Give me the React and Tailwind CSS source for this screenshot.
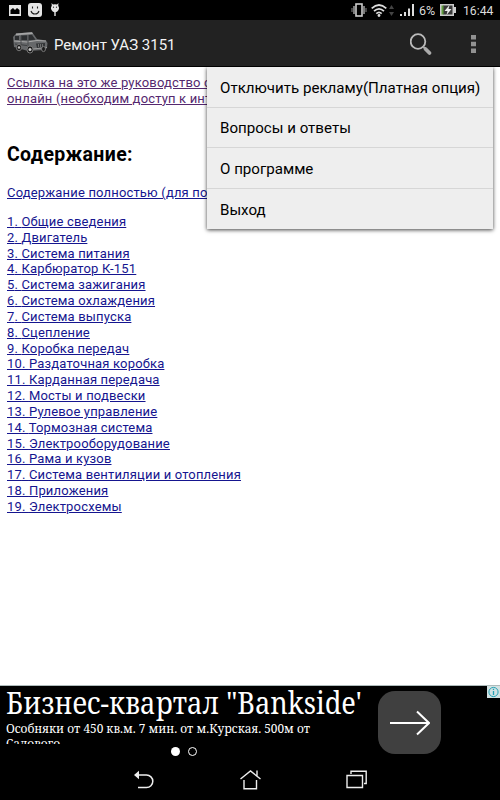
import React from 'react';

const menuItems = [
  'Отключить рекламу(Платная опция)',
  'Вопросы и ответы',
  'О программе',
  'Выход',
];

const chapters = [
  'Общие сведения',
  'Двигатель',
  'Система питания',
  'Карбюратор К-151',
  'Система зажигания',
  'Система охлаждения',
  'Система выпуска',
  'Сцепление',
  'Коробка передач',
  'Раздаточная коробка',
  'Карданная передача',
  'Мосты и подвески',
  'Рулевое управление',
  'Тормозная система',
  'Электрооборудование',
  'Рама и кузов',
  'Система вентиляции и отопления',
  'Приложения',
  'Электросхемы',
];

const StatusBar = () => (
  <div className="flex h-5 items-center justify-between bg-black pl-[9px] pr-[6px] text-[#dcdcdc]">
    <div className="flex items-center">
      <svg width="12" height="11" viewBox="0 0 12 11">
        <path fill="#e4e4e4" d="M0 0h12v11H0z" />
        <path fill="#000" d="M1.5 5 4 3l2 2 2-2 2.5 2v4h-9z" />
      </svg>
      <svg className="ml-[7px]" width="14" height="14" viewBox="0 0 14 14">
        <rect width="14" height="14" rx="3" fill="#e4e4e4" />
        <path d="M4.5 3.6v2M9.5 3.6v2M3 8c1.2 4 6.8 4 8 0" fill="none" stroke="#222" strokeWidth="1.1" />
      </svg>
      <svg className="ml-[8px]" width="10" height="14" viewBox="0 0 10 14">
        <path fill="#e4e4e4" d="M1.5 0 3 1.6Q5 .8 7 1.6L8.5 0 8.2 2.5Q9.6 4.5 8.5 7 7.5 9 5.7 9.3V13H4.3V9.3Q2.5 9 1.5 7 .4 4.5 1.8 2.5z" />
        <circle cx="3.5" cy="4.2" r=".6" fill="#222" />
        <circle cx="6.5" cy="4.2" r=".6" fill="#222" />
      </svg>
    </div>
    <div className="flex items-center">
      <svg width="16" height="14" viewBox="0 0 16 14" fill="none" stroke="#ccc">
        <rect x="5" y="1" width="6" height="12" strokeWidth="1.6" />
        <path d="M3 3v8M13 3v8" strokeWidth="1.2" />
        <path d="M1 5v4M15 5v4" stroke="#888" />
      </svg>
      <svg className="ml-[4px]" width="16" height="13" viewBox="0 0 16 13" fill="none" stroke="#ddd" strokeWidth="1.7">
        <path d="M.7 4.4Q8-2.4 15.3 4.4M3 7.2Q8 2.4 13 7.2M5.3 9.7Q8 7.2 10.7 9.7" />
        <circle cx="8" cy="11.5" r="1.4" fill="#ddd" stroke="none" />
      </svg>
      <svg className="ml-[2px]" width="5" height="11" viewBox="0 0 5 11" fill="#444">
        <path d="M0 4 2.5 0 5 4zM0 7h5l-2.5 4z" />
      </svg>
      <svg className="ml-[6px]" width="15" height="12" viewBox="0 0 15 12" fill="#ddd">
        <path d="M0 10h2v2H0zM4 8h2v4H4zM8 4.5h2V12H8zM12 0h2v12h-2z" />
      </svg>
      <span className="ml-[4px] w-[18px] pt-px text-[12.5px] leading-5">6%</span>
      <svg className="ml-[3px]" width="16" height="12" viewBox="0 0 16 12">
        <path fill="#ccc" d="M0 0h14v3h2v6h-2v3H0z" />
        <path fill="#383838" d="M3 1.5h9.5v9H3z" />
        <path fill="#5f9c3c" d="M1.5 1.5h2v9h-2z" />
        <path fill="#eee" d="M9.5 1 4.5 7h3l-1 4 5-6h-3z" />
      </svg>
      <span className="ml-[7px] w-[31px] whitespace-nowrap pt-px text-[12.2px] leading-5">16:44</span>
    </div>
  </div>
);

const Jeep = () => (
  <svg width="35" height="22" viewBox="0 0 35 22">
    <path d="M0 5 3 1.5 19 0 24 7 33 8.5 34.5 11 34 16 31 18 15 19 1 15z" fill="#66686a" />
    <path d="M3 1.5 19 .3 20 2 3 3.2z" fill="#a5a5a5" />
    <path d="M2 4h4v4H2zM8 3.5l6-.3v5L8 8zM15.5 3l3.5-.2 3.5 5-7 .4z" fill="#2c2e30" />
    <path d="M1 9 14 10 24 8.5 33 9" stroke="#a8a8a8" fill="none" />
    <path d="M2 12 14 13.5" stroke="#3c3e40" />
    <path d="M8 4v11M15 3v13" stroke="#4a4c4e" />
    <path d="M23 11.5 32 11v4l-8 1z" fill="#333537" />
    <path d="M25.5 12v3M27.5 12v3M29.5 12v3" stroke="#888" strokeWidth=".7" />
    <path d="M20 17 34 15.5" stroke="#999" strokeWidth="1.2" />
    <g fill="#1c1c1c" stroke="#777">
      <ellipse cx="6" cy="15.5" rx="2.6" ry="3.3" />
      <ellipse cx="17" cy="17.5" rx="3" ry="3.6" />
      <ellipse cx="30.5" cy="17" rx="2" ry="2.6" />
    </g>
    <circle cx="6" cy="15.5" r="1.2" fill="#bbb" />
    <circle cx="17" cy="17.5" r="1.5" fill="#ccc" />
  </svg>
);

const ActionBar = () => (
  <div className="flex h-[47px] items-center border-b border-black bg-[#222] pl-[13px] pr-[24px]">
    <Jeep />
    <h1 className="ml-[6px] whitespace-nowrap pt-[4px] text-[15px] text-[#f3f3f3]">Ремонт УАЗ 3151</h1>
    <svg className="ml-auto mt-[2px]" width="23" height="23" viewBox="0 0 23 23" fill="none">
      <circle cx="8" cy="8.5" r="7.3" stroke="#bbb" strokeWidth="1.8" />
      <path d="M13 13.5 15.5 16" stroke="#aaa" strokeWidth="2" />
      <path d="m15.5 16 4 4" stroke="#aaa" strokeWidth="3.8" strokeLinecap="round" />
    </svg>
    <svg className="ml-[38px] mt-[2px]" width="5" height="18" viewBox="0 0 5 18" fill="#929292">
      <path d="M0 0h5v4.5H0zM0 6.7h5v4.5H0zM0 13.4h5v4.5H0z" />
    </svg>
  </div>
);

const OptionsMenu = () => (
  <ul className="absolute right-[7px] top-0 h-[162px] w-[286px] divide-y divide-[#d6d6d6] bg-[#eee] shadow-[0_1px_4px_rgba(0,0,0,0.75)] [clip-path:inset(0_-8px_-8px_-8px)]">
    {menuItems.map((item) => (
      <li key={item} className="flex h-[40.7px] items-center whitespace-nowrap pl-[13px] pt-[2px] text-[15.1px] text-black">
        {item}
      </li>
    ))}
  </ul>
);

const Contents = () => (
  <div className="w-[207px] overflow-x-clip pl-[7px] pt-[8px] text-[13px] leading-[15.83px] tracking-[0.17px] text-[#15158f]">
    <a href="#online" className="block whitespace-nowrap text-[#55286f] underline">
      Ссылка на это же руководство с
      <br />
      онлайн (необходим доступ к инт
    </a>
    <h2 className="mt-[36px] text-[19.5px] font-bold leading-6 tracking-[0.35px] text-black">Содержание:</h2>
    <a href="#full" className="mt-[18.5px] block whitespace-nowrap underline">
      Содержание полностью (для по
    </a>
  </div>
);

const ChapterList = () => (
  <ol className="mt-[13px] pl-[7px] text-[13px] leading-[15.83px] tracking-[0.17px] text-[#15158f]">
    {chapters.map((title, i) => (
      <li key={title} className="whitespace-nowrap">
        <a href={`#${i + 1}`} className="underline">{i + 1}. {title}</a>
      </li>
    ))}
  </ol>
);

const AdBanner = () => (
  <div className="relative flex h-[60px] border-t border-[#aebbbb] bg-black font-['Noto_Serif','DejaVu_Serif_Condensed','DejaVu_Serif',serif] text-white">
    <div className="h-[58px] w-[372px] overflow-hidden pl-[6px]">
      <div className="h-[35px] w-max origin-left scale-x-[0.905] whitespace-nowrap text-[30px] leading-[33px]">
        Бизнес-квартал "Bankside'
      </div>
      <div className="w-max origin-left scale-x-[0.912] whitespace-nowrap text-[13px] leading-[15px]">
        Особняки от 450 кв.м. 7 мин. от м.Курская. 500м от
        <br />
        Садового
      </div>
    </div>
    <button type="button" className="ml-[6px] mt-[5px] flex h-[63px] w-[63px] shrink-0 items-center justify-center rounded-[17px] bg-[#404040]">
      <svg width="40" height="26" viewBox="0 0 40 26" fill="none" stroke="white" strokeWidth="2">
        <path d="M0 13h39M27 1.5 39 13 27 24.5" />
      </svg>
    </button>
    <svg className="absolute right-0 top-0" width="13" height="12" viewBox="0 0 13 12">
      <path fill="#d3e2e3" d="M0 0h13v12H0z" />
      <circle cx="6.5" cy="6" r="4.6" fill="none" stroke="#25a2b5" />
      <path d="M6.5 5v4M6.5 2.8v1.3" stroke="#25a2b5" strokeWidth="1.3" />
    </svg>
  </div>
);

const NavBar = () => (
  <div className="h-[55px] bg-black">
    <div className="flex h-[13px] items-center pl-[171px]">
      <span className="h-[9px] w-[9px] rounded-full bg-white" />
      <span className="ml-[8px] h-[9px] w-[9px] rounded-full border border-white" />
    </div>
    <div className="flex items-start pl-[134px] pt-[12px]">
      <svg width="20" height="20" viewBox="0 0 20 20" fill="none" stroke="#eee" strokeWidth="1.5">
        <path d="M4 5h8.5a6.3 6.3 0 0 1 0 12.6H4" />
        <path d="M0 5 5 .8v8.4z" fill="#eee" stroke="none" />
      </svg>
      <svg className="ml-[86px]" width="21" height="20" viewBox="0 0 21 20" fill="none" stroke="#eee" strokeWidth="1.4">
        <path d="M.5 9 10.5 1 20.5 9M4 10v8.7h12.5V10M17 .5v5.500" />
      </svg>
      <svg className="ml-[85px]" width="21" height="19" viewBox="0 0 21 19" fill="none" stroke="#eee" strokeWidth="1.4">
        <path d="M1 5.5h15.5v12H1zM5 4V1.200H20.2v12.300H18" />
      </svg>
    </div>
  </div>
);

export default function App() {
  return (
    <div className="flex h-[800px] w-[500px] flex-col overflow-hidden bg-white font-[Roboto,sans-serif]">
      <StatusBar />
      <ActionBar />
      <main className="relative flex-1">
        <Contents />
        <ChapterList />
        <OptionsMenu />
      </main>
      <AdBanner />
      <NavBar />
    </div>
  );
}
